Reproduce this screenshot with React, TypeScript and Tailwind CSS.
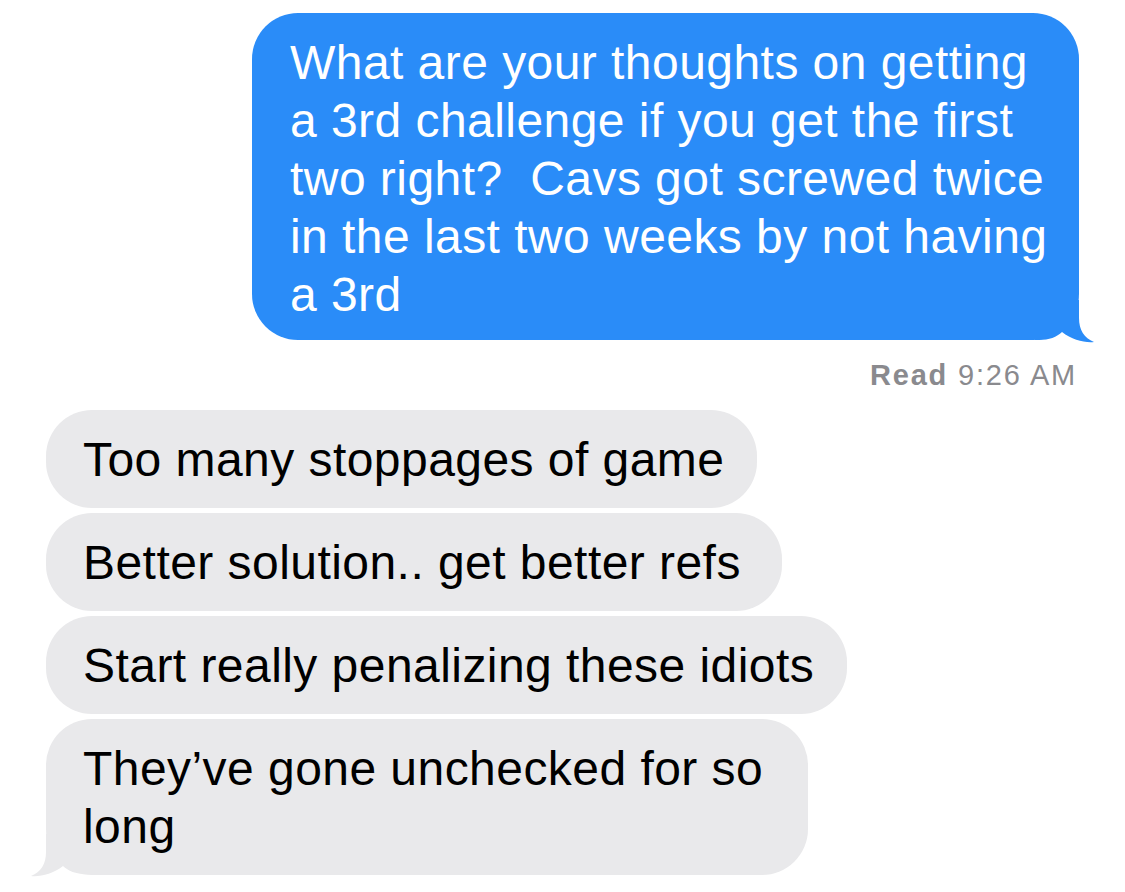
const sent = [
  "What are your thoughts on getting",
  "a 3rd challenge if you get the first",
  "two right?  Cavs got screwed twice",
  "in the last two weeks by not having",
  "a 3rd",
];

const received = [
  { lines: ["Too many stoppages of game"], width: "w-[711px]" },
  { lines: ["Better solution.. get better refs"], width: "w-[736px]" },
  { lines: ["Start really penalizing these idiots"], width: "w-[801px]" },
  { lines: ["They\u2019ve gone unchecked for so", "long"], width: "w-[762px]", tail: true },
];

function TailRight() {
  return (
    <svg
      className="absolute right-[-16px] bottom-[-4px]"
      width="60"
      height="44"
      viewBox="0 0 60 44"
    >
      <path
        d="M0 0 H44 V18 C44 30 49 38 59 42 C50 43 37 40 27 32 C22 37 14 40 4 40 H0 Z"
        fill="#2a8cf8"
      />
    </svg>
  );
}

function TailLeft() {
  return (
    <svg
      className="absolute left-[-16px] bottom-[-3px]"
      width="60"
      height="44"
      viewBox="0 0 60 44"
    >
      <path
        d="M60 0 H16 V18 C16 30 11 38 1 42 C10 43 23 40 33 32 C38 37 46 40 56 40 H60 Z"
        fill="#e9e9eb"
      />
    </svg>
  );
}

export default function App() {
  return (
    <div
      className="min-h-screen w-[1125px] bg-white pt-[13px]"
      style={{ fontFamily: '"Liberation Sans", Arial, sans-serif' }}
    >
      <div className="flex justify-end pr-[46px]">
        <div className="relative w-[827px] rounded-[46px] bg-[#2a8cf8] pl-[38px] pt-[21px] pb-[16px] text-[48px] leading-[58px] tracking-[0.45px] text-white">
          <TailRight />
          {sent.map((line, i) => (
            <div key={i} className="relative whitespace-pre">
              {line}
            </div>
          ))}
        </div>
      </div>

      <div className="mt-[18px] flex justify-end pr-[48px]">
        <span className="text-[29px] leading-[34px] tracking-[1.8px] text-[#8a8a8e]">
          <strong className="font-bold">Read</strong> 9:26 AM
        </span>
      </div>

      <div className="mt-[18px] flex flex-col gap-[5px] pl-[46px]">
        {received.map((msg, i) => (
          <div
            key={i}
            className={`relative ${msg.width} rounded-[46px] bg-[#e9e9eb] pl-[37px] pt-[21px] pb-[19px] text-[48px] leading-[58px] tracking-[0.45px] text-black`}
          >
            {msg.tail && <TailLeft />}
            {msg.lines.map((line, j) => (
              <div key={j} className="relative whitespace-pre">
                {line}
              </div>
            ))}
          </div>
        ))}
      </div>
    </div>
  );
}
